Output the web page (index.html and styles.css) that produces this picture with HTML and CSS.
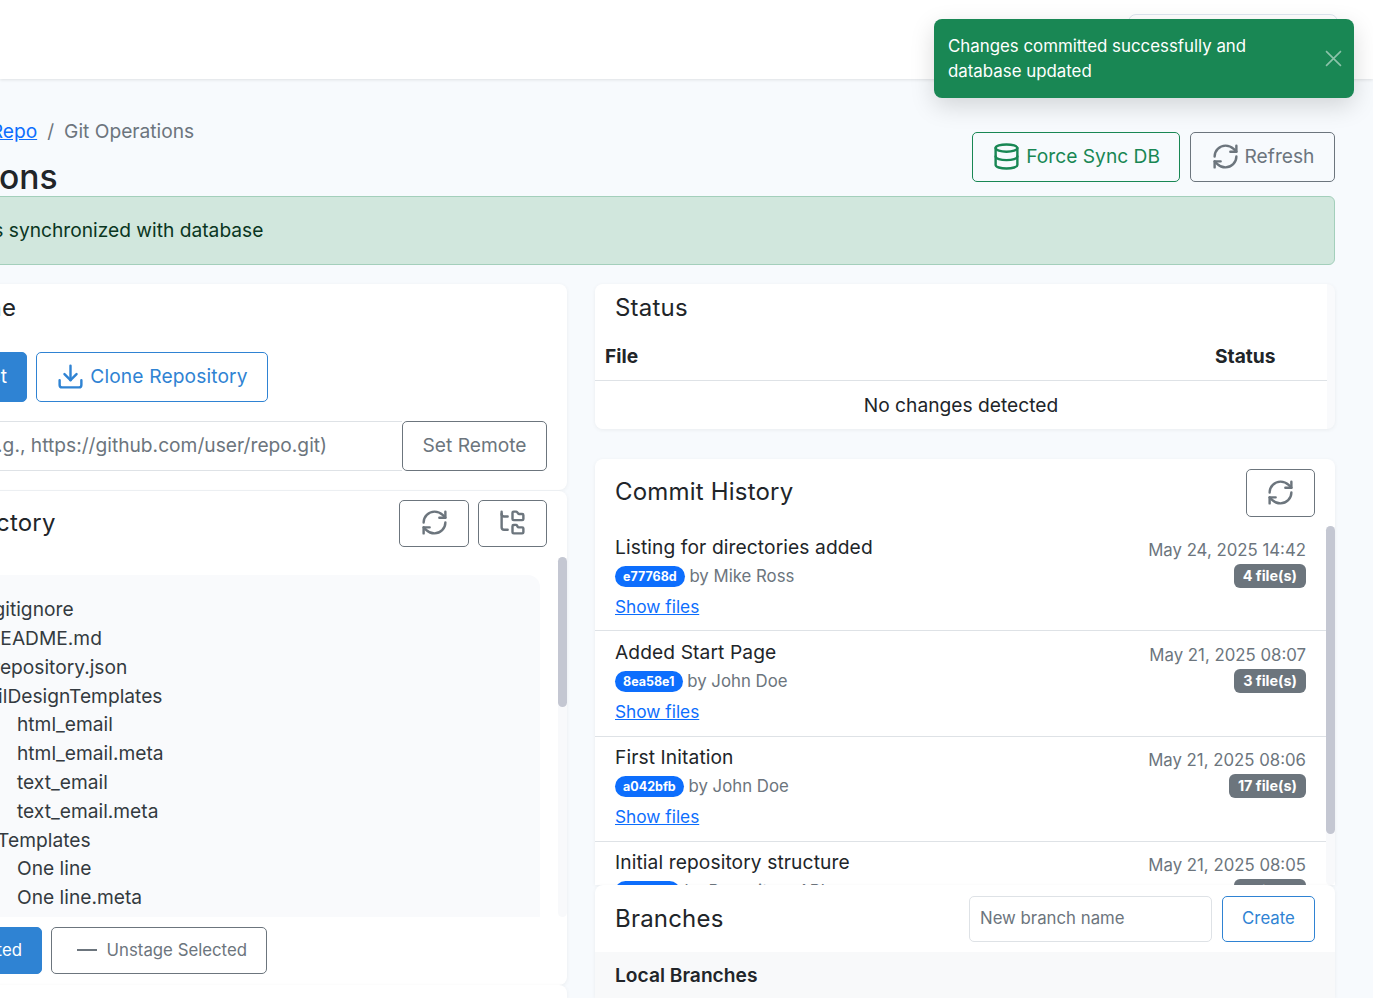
FILE: index.html
```html
<!DOCTYPE html>
<html lang="en">
<head>
    <meta charset="UTF-8">
    <meta name="viewport" content="width=device-width, initial-scale=1.0">
    <title>Git Operations</title>
    <link rel="stylesheet" href="styles.css">
</head>
<body>

    <svg class="sprite" aria-hidden="true">
        <symbol id="i-refresh" viewBox="0 0 24 24">
            <path d="M3 12a9 9 0 0 1 9-9 9.75 9.75 0 0 1 6.74 2.74L21 8"/>
            <path d="M21 3v5h-5"/>
            <path d="M21 12a9 9 0 0 1-9 9 9.75 9.75 0 0 1-6.74-2.74L3 16"/>
            <path d="M8 16H3v5"/>
        </symbol>
        <symbol id="i-database" viewBox="0 0 24 24">
            <ellipse cx="12" cy="5" rx="9" ry="3"/>
            <path d="M3 5V19A9 3 0 0 0 21 19V5"/>
            <path d="M3 12A9 3 0 0 0 21 12"/>
        </symbol>
        <symbol id="i-download" viewBox="0 0 24 24">
            <path d="M21 15v4a2 2 0 0 1-2 2H5a2 2 0 0 1-2-2v-4"/>
            <path d="M7 10l5 5 5-5"/>
            <path d="M12 15V3"/>
        </symbol>
        <symbol id="i-tree" viewBox="0 0 24 24">
            <path d="M20 10a1 1 0 0 0 1-1V6a1 1 0 0 0-1-1h-2.5a1 1 0 0 1-.8-.4l-.9-1.2A1 1 0 0 0 15 3h-2a1 1 0 0 0-1 1v5a1 1 0 0 0 1 1Z"/>
            <path d="M20 21a1 1 0 0 0 1-1v-3a1 1 0 0 0-1-1h-2.9a1 1 0 0 1-.88-.55l-.42-.85a1 1 0 0 0-.92-.6H13a1 1 0 0 0-1 1v5a1 1 0 0 0 1 1Z"/>
            <path d="M3 5a2 2 0 0 0 2 2h3"/>
            <path d="M3 3v13a2 2 0 0 0 2 2h3"/>
        </symbol>
    </svg>

    <header class="topbar">
        <div class="user-box"></div>
    </header>

    <div class="toast">
        <div class="toast-text">Changes committed successfully and database updated</div>
        <button class="toast-close" aria-label="Close">
            <svg viewBox="0 0 16 16"><path d="M1 1l14 14M15 1L1 15"/></svg>
        </button>
    </div>

    <main class="content">
        <div class="page-head">
            <div>
                <div class="breadcrumb">
                    <a href="#">Git Repo</a><span class="crumb-sep">/</span><span>Git Operations</span>
                </div>
                <h1>Git Operations</h1>
            </div>
            <div class="head-actions">
                <button class="btn btn-green"><svg class="icon"><use href="#i-database"/></svg>Force Sync DB</button>
                <button class="btn btn-grey btn-refresh"><svg class="icon"><use href="#i-refresh"/></svg>Refresh</button>
            </div>
        </div>

        <div class="alert">Repository is synchronized with database</div>

        <div class="columns">
            <div class="col">
                <section class="card remote-card">
                    <h2 class="card-title">Remote Clone</h2>
                    <div class="remote-actions">
                        <button class="btn btn-blue btn-connect">Connect</button>
                        <button class="btn btn-outline-blue btn-clone"><svg class="icon"><use href="#i-download"/></svg>Clone Repository</button>
                    </div>
                    <div class="input-group">
                        <input type="text" class="remote-input" placeholder="Remote URL (e.g., https://github.com/user/repo.git)">
                        <button class="btn btn-grey">Set Remote</button>
                    </div>
                </section>

                <section class="card dir-card">
                    <div class="card-head">
                        <h2 class="card-title">Working Directory</h2>
                        <div class="icon-btns">
                            <button class="btn btn-grey btn-icon"><svg class="icon"><use href="#i-refresh"/></svg></button>
                            <button class="btn btn-grey btn-icon btn-narrow"><svg class="icon"><use href="#i-tree"/></svg></button>
                        </div>
                    </div>
                    <div class="scroll-area tree-area">
                        <div class="scroll-view">
                            <ul class="tree">
                                <li class="file">.gitignore</li>
                                <li class="file">README.md</li>
                                <li class="file file-wide">repository.json</li>
                                <li class="dir">EmailDesignTemplates</li>
                                <li class="child">html_email</li>
                                <li class="child">html_email.meta</li>
                                <li class="child">text_email</li>
                                <li class="child">text_email.meta</li>
                                <li class="dir">TextTemplates</li>
                                <li class="child">One line</li>
                                <li class="child">One line.meta</li>
                            </ul>
                        </div>
                        <div class="scroll-track"><div class="scroll-thumb tree-thumb"></div></div>
                    </div>
                    <div class="stage-actions">
                        <button class="btn btn-blue btn-small btn-stage">Stage Selected</button>
                        <button class="btn btn-grey btn-small btn-unstage"><svg class="minus" viewBox="0 0 20 4"><path d="M0 2h20"/></svg>Unstage Selected</button>
                    </div>
                </section>

                <section class="card next-card"></section>
            </div>

            <div class="col">
                <section class="card status-card">
                    <div class="status-inner">
                        <h2 class="card-title">Status</h2>
                        <table class="status-table">
                            <thead>
                                <tr><th class="th-file">File</th><th class="th-status">Status</th></tr>
                            </thead>
                            <tbody>
                                <tr><td colspan="2">No changes detected</td></tr>
                            </tbody>
                        </table>
                    </div>
                </section>

                <section class="card commit-card">
                    <div class="card-head commit-head">
                        <h2 class="card-title">Commit History</h2>
                        <button class="btn btn-grey btn-icon btn-narrow btn-tall"><svg class="icon"><use href="#i-refresh"/></svg></button>
                    </div>
                    <div class="scroll-area commit-area">
                        <div class="scroll-view">
                            <div class="commit">
                                <div>
                                    <div class="commit-title">Listing for directories added</div>
                                    <div class="commit-meta"><span class="hash">e77768d</span> by Mike Ross</div>
                                    <a href="#" class="show-files">Show files</a>
                                </div>
                                <div class="commit-side">
                                    <div class="commit-date">May 24, 2025 14:42</div>
                                    <span class="count">4 file(s)</span>
                                </div>
                            </div>
                            <div class="commit">
                                <div>
                                    <div class="commit-title">Added Start Page</div>
                                    <div class="commit-meta"><span class="hash">8ea58e1</span> by John Doe</div>
                                    <a href="#" class="show-files">Show files</a>
                                </div>
                                <div class="commit-side">
                                    <div class="commit-date">May 21, 2025 08:07</div>
                                    <span class="count">3 file(s)</span>
                                </div>
                            </div>
                            <div class="commit">
                                <div>
                                    <div class="commit-title">First Initation</div>
                                    <div class="commit-meta"><span class="hash">a042bfb</span> by John Doe</div>
                                    <a href="#" class="show-files">Show files</a>
                                </div>
                                <div class="commit-side">
                                    <div class="commit-date">May 21, 2025 08:06</div>
                                    <span class="count">17 file(s)</span>
                                </div>
                            </div>
                            <div class="commit">
                                <div>
                                    <div class="commit-title">Initial repository structure</div>
                                    <div class="commit-meta"><span class="hash">2c1f0ab</span> by Repository API</div>
                                </div>
                                <div class="commit-side">
                                    <div class="commit-date">May 21, 2025 08:05</div>
                                    <span class="count">5 file(s)</span>
                                </div>
                            </div>
                        </div>
                        <div class="scroll-track"><div class="scroll-thumb commit-thumb"></div></div>
                    </div>
                </section>

                <section class="card branch-card">
                    <div class="card-head branch-head">
                        <h2 class="card-title">Branches</h2>
                        <div class="branch-form">
                            <input type="text" class="branch-input" placeholder="New branch name">
                            <button class="btn btn-outline-blue btn-small btn-create">Create</button>
                        </div>
                    </div>
                    <div class="branch-body">
                        <h3>Local Branches</h3>
                    </div>
                </section>
            </div>
        </div>
    </main>

</body>
</html>
```

FILE: styles.css
```css
html,
body {
    height: 998px;
    overflow: hidden;
}

body {
    margin: 0;
    background-color: #f7fafd;
    color: #212529;
    font-family: "Inter", "Liberation Sans", sans-serif;
    font-size: 19.2px;
    line-height: 1.5;
    position: relative;
}

.sprite {
    display: none;
}

.icon {
    width: 29px;
    height: 29px;
    fill: none;
    stroke: currentColor;
    stroke-width: 2;
    stroke-linecap: round;
    stroke-linejoin: round;
    flex-shrink: 0;
}

/* top bar */
.topbar {
    height: 79px;
    background-color: #fff;
    box-shadow: 0 1px 3px rgba(0, 0, 0, 0.1);
    display: flex;
    justify-content: flex-end;
    padding-right: 35px;
    box-sizing: border-box;
}

.user-box {
    width: 210px;
    height: 50px;
    margin-top: 14px;
    border: 1px solid #dee6f0;
    border-radius: 8px;
    box-sizing: border-box;
}

/* toast */
.toast {
    position: absolute;
    top: 19px;
    left: 934px;
    width: 420px;
    height: 79px;
    box-sizing: border-box;
    padding: 15px 0 0 14px;
    background-color: #198754;
    color: #fff;
    border-radius: 8px;
    box-shadow: 0 8px 24px rgba(0, 0, 0, 0.15);
    font-size: 16.85px;
    line-height: 25px;
    z-index: 10;
}

.toast-text {
    width: 340px;
}

.toast-close {
    position: absolute;
    top: 31px;
    right: 12px;
    width: 17px;
    height: 17px;
    padding: 0;
    border: none;
    background: none;
    opacity: 0.5;
}

.toast-close svg {
    display: block;
    fill: none;
    stroke: #fff;
    stroke-width: 1.5;
}

/* page */
.content {
    margin-left: -173px;
    width: 1508px;
}

.page-head {
    display: flex;
    justify-content: space-between;
    align-items: flex-start;
    padding-top: 38px;
    height: 117px;
    box-sizing: border-box;
}

.breadcrumb {
    color: #6c757d;
    line-height: 29px;
    padding-left: 133px;
}

.breadcrumb a {
    color: #0d6efd;
}

.crumb-sep {
    padding: 0 10px;
}

h1 {
    margin: 6px 0 0;
    font-size: 33.6px;
    font-weight: 500;
    line-height: 50px;
}

.head-actions {
    display: flex;
    gap: 10px;
    padding-top: 15px;
}

.btn {
    display: inline-flex;
    align-items: center;
    justify-content: center;
    gap: 5px;
    height: 50px;
    padding: 0 19px 2px;
    background-color: transparent;
    border: 1px solid #6c757d;
    border-radius: 5px;
    color: #6c757d;
    font-family: inherit;
    font-size: 19.2px;
    white-space: nowrap;
    box-sizing: border-box;
    cursor: pointer;
}

.btn-green {
    border-color: #198754;
    color: #198754;
}

.btn-refresh {
    width: 145px;
    padding: 0 0 2px;
}

.btn-blue {
    background-color: #2f83d3;
    border-color: #2f83d3;
    color: #fff;
}

.btn-outline-blue {
    border-color: #2f83d3;
    color: #2f83d3;
}

.btn-small {
    height: 47px;
    font-size: 16.8px;
}

.btn-icon {
    height: 47px;
    width: 70px;
    padding: 0 0 2px;
}

.btn-narrow {
    width: 69px;
}

.btn-tall {
    height: 48px;
}

.alert {
    height: 69px;
    box-sizing: border-box;
    padding: 19px 14px 19px 58px;
    background-color: #d1e7dd;
    border: 1px solid #a3cfbb;
    border-radius: 6px;
    color: #0a3622;
    margin-bottom: 19px;
}

.columns {
    display: grid;
    grid-template-columns: 740px 740px;
    gap: 28px;
}

.col {
    display: flex;
    flex-direction: column;
}

.card {
    background-color: #fff;
    border-radius: 8px;
    box-shadow: 0 1px 4px rgba(0, 0, 0, 0.06);
}

.card-title {
    margin: 0;
    font-size: 24px;
    font-weight: 400;
    letter-spacing: 0.2px;
    line-height: 36px;
}

.card-head {
    display: flex;
    justify-content: space-between;
    align-items: center;
}

/* remote card */
.remote-card {
    height: 206px;
    padding: 6px 20px 0;
    box-sizing: border-box;
}

.remote-card .card-title {
    padding-left: 8px;
}

.remote-actions {
    display: flex;
    gap: 9px;
    margin-top: 26px;
}

.btn-connect {
    width: 180px;
    justify-content: flex-end;
}

.btn-clone {
    width: 232px;
    padding: 0 0 2px;
    letter-spacing: 0.13px;
}

.input-group {
    display: flex;
    margin-top: 19px;
}

.remote-input {
    flex: 1;
    height: 50px;
    box-sizing: border-box;
    padding: 0 0 2px 14px;
    border: 1px solid #dee2e6;
    border-right: none;
    font-family: inherit;
    font-size: 19.2px;
    background-color: #fff;
}

.input-group .btn {
    width: 145px;
}

/* directory card */
.dir-card {
    margin-top: 1px;
    height: 494px;
    box-sizing: border-box;
    padding-top: 9px;
}

.dir-card .card-head {
    padding: 0 20px;
}

.dir-card .card-title,
.commit-head .card-title {
    padding-bottom: 2px;
}

.icon-btns {
    display: flex;
    gap: 9px;
}

/* scrollbars are drawn so they also show when the browser hides its own */
.scroll-area {
    position: relative;
}

.scroll-view {
    height: 100%;
    overflow: hidden;
    padding-right: 9px;
}

.scroll-track {
    position: absolute;
    top: 0;
    right: 0;
    bottom: 0;
    width: 9px;
    background-color: #f8f9fb;
    border-radius: 6px;
}

.scroll-thumb {
    background-color: #c4c7d2;
    border-radius: 6px;
}

.tree-area {
    margin-top: 10px;
    height: 360px;
}

.tree-thumb {
    height: 150px;
}

.tree {
    list-style: none;
    margin: 18px 18px 0 20px;
    padding: 20.2px 0 60px;
    background-color: #f9fafc;
    border-radius: 12px;
    color: #343a40;
    line-height: 28.8px;
}

.file {
    padding-left: 141px;
}

.file-wide {
    padding-left: 146px;
}

.dir {
    padding-left: 112px;
}

.child {
    padding-left: 170px;
}

.stage-actions {
    display: flex;
    gap: 9px;
    margin-top: 10px;
    padding: 0 20px;
}

.btn-stage {
    width: 195px;
    justify-content: flex-end;
}

.btn-unstage {
    width: 216px;
    gap: 10px;
    justify-content: flex-end;
}

.minus {
    width: 20px;
    height: 4px;
    fill: none;
    stroke: currentColor;
    stroke-width: 2;
}

.next-card {
    height: 13px;
    border-radius: 8px 8px 0 0;
}

/* right column */
.status-card {
    height: 145px;
    margin-bottom: 30px;
    background-color: #f9fafc;
}

.status-inner {
    width: 732px;
    height: 100%;
    padding-top: 6px;
    box-sizing: border-box;
    background-color: #fff;
    border-radius: 8px 0 0 8px;
}

.status-card .card-title {
    padding-left: 20px;
}

.status-table {
    width: 100%;
    margin-top: 6px;
    border-collapse: collapse;
}

.status-table th {
    text-align: left;
    padding: 6px 10px 4px;
    height: 48px;
    box-sizing: border-box;
    border-bottom: 1px solid #dee2e6;
}

.th-status {
    width: 122px;
}

.status-table td {
    text-align: center;
    padding: 10px;
    height: 48px;
    box-sizing: border-box;
}

.commit-card {
    height: 426px;
    overflow: hidden;
    border-radius: 8px 8px 0 0;
}

.commit-head {
    padding: 10px 20px 9px;
}

.commit-area {
    height: 359px;
}

.commit-thumb {
    height: 308px;
}

.commit {
    display: flex;
    justify-content: space-between;
    height: 105.3px;
    box-sizing: border-box;
    padding: 6.5px 20px 0;
    border-bottom: 1px solid #dee2e6;
}

.commit-title {
    letter-spacing: 0.1px;
    line-height: 28px;
}

.commit-meta {
    color: #6c757d;
    font-size: 16.8px;
    line-height: 30px;
}

.hash {
    display: inline-block;
    padding: 0 8px;
    background-color: #0d6efd;
    border-radius: 12px;
    color: #fff;
    font-size: 12.5px;
    font-weight: 700;
    line-height: 21px;
    vertical-align: 1px;
}

.show-files {
    display: block;
    margin-top: 1px;
    color: #0d6efd;
    font-size: 17.28px;
    line-height: 30px;
}

.commit-side {
    text-align: right;
}

.commit-date {
    color: #6c757d;
    font-size: 16.8px;
    line-height: 20px;
    padding-top: 7px;
}

.count {
    display: inline-block;
    padding: 0 9px;
    background-color: #6c757d;
    border-radius: 6px;
    color: #fff;
    font-size: 14.4px;
    font-weight: 700;
    line-height: 24px;
}

.branch-card {
    position: relative;
    height: 113px;
    border-radius: 8px 8px 0 0;
}

.branch-head {
    height: 67px;
    padding: 0 20px;
    box-sizing: border-box;
}

.branch-form {
    display: flex;
    gap: 10px;
}

.branch-input {
    width: 243px;
    height: 46px;
    box-sizing: border-box;
    padding: 0 10px 2px;
    border: 1px solid #dee2e6;
    border-radius: 5px;
    font-family: inherit;
    font-size: 16.8px;
}

.btn-create {
    height: 46px;
    width: 93px;
    padding: 0 0 2px;
}

.branch-body {
    background-color: #f8f9fa;
    padding: 9px 20px 0;
    height: 46px;
    box-sizing: border-box;
}

h3 {
    margin: 0;
    font-size: 19.2px;
    font-weight: 600;
    line-height: 29px;
}

input::placeholder {
    color: #6c757d;
}
```
